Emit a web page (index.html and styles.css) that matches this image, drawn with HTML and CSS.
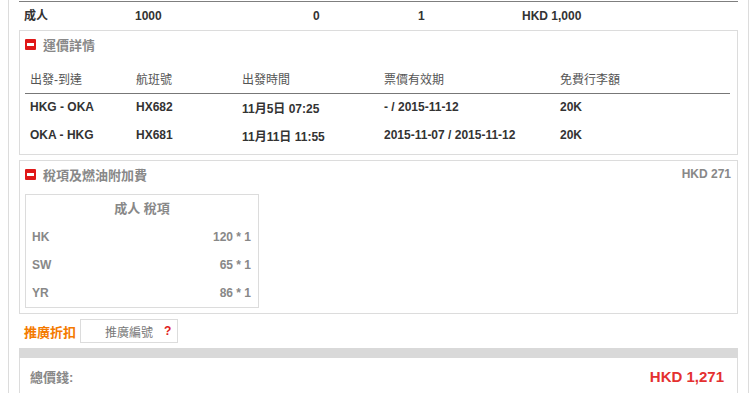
FILE: index.html
```html
<!DOCTYPE html>
<html lang="zh-Hant">
<head>
<meta charset="utf-8">
<title>Fare summary</title>
<link rel="stylesheet" href="styles.css">
</head>
<body>
<div class="page">
  <div class="summary">
    <span>成人</span><span>1000</span><span>0</span><span>1</span><span>HKD 1,000</span>
  </div>

  <section class="box fare">
    <div class="box-title"><i class="minus"></i><span class="title-text">運價詳情</span></div>
    <table class="flights">
      <thead>
        <tr><th class="c1">出發-到達</th><th class="c2">航班號</th><th class="c3">出發時間</th><th class="c4">票價有效期</th><th>免費行李額</th></tr>
      </thead>
      <tbody>
        <tr><td>HKG - OKA</td><td>HX682</td><td>11月5日 07:25</td><td>- / 2015-11-12</td><td>20K</td></tr>
        <tr><td>OKA - HKG</td><td>HX681</td><td>11月11日 11:55</td><td>2015-11-07 / 2015-11-12</td><td>20K</td></tr>
      </tbody>
    </table>
  </section>

  <section class="box tax">
    <div class="box-title"><i class="minus"></i><span class="title-text">稅項及燃油附加費</span><span class="amount">HKD 271</span></div>
    <div class="tax-table">
      <div class="tax-head">成人 稅項</div>
      <div class="tax-row"><span>HK</span><span>120 * 1</span></div>
      <div class="tax-row"><span>SW</span><span>65 * 1</span></div>
      <div class="tax-row"><span>YR</span><span>86 * 1</span></div>
    </div>
  </section>

  <div class="promo">
    <span class="promo-label">推廣折扣</span>
    <div class="promo-input"><span class="placeholder">推廣編號</span><span class="q">?</span></div>
  </div>

  <section class="total">
    <div class="total-bar"></div>
    <div class="total-row"><span class="total-label">總價錢:</span><span class="price">HKD 1,271</span></div>
  </section>
</div>
</body>
</html>
```

FILE: styles.css
```css
* { box-sizing: border-box; }

html, body {
  margin: 0;
  padding: 0;
  background: #fff;
}

body {
  font-family: "Liberation Sans", Arial, "Noto Sans CJK TC", sans-serif;
  font-size: 12px;
  color: #333;
  overflow: hidden;
}

.page {
  margin-left: 8px;
  width: 741px;
  min-height: 100vh;
  padding: 1px 10px 0 10px;
  border-left: 1px solid #dcdcdc;
  border-right: 1px solid #dcdcdc;
}

.summary {
  display: grid;
  grid-template-columns: 111px 178px 105px 104px 1fr;
  height: 29px;
  line-height: 28px;
  border-top: 1px solid #7f7f7f;
  font-weight: bold;
  color: #333;
}
.summary span { padding-left: 5px; }

.box {
  border: 1px solid #dcdcdc;
}

.box-title {
  display: flex;
  align-items: center;
  height: 26px;
  padding: 0 6px 0 5px;
}

.minus {
  position: relative;
  display: block;
  width: 11px;
  height: 11px;
  background: #e01818;
  border-radius: 1px;
  flex: none;
}
.minus::after {
  content: "";
  position: absolute;
  left: 2px;
  top: 4px;
  width: 7px;
  height: 3px;
  background: #fff;
}

.title-text {
  margin-left: 7px;
  font-size: 13px;
  font-weight: bold;
  color: #888;
}

.amount {
  margin-left: auto;
  font-weight: bold;
  color: #888;
}

.fare {
  padding-bottom: 5px;
}

.flights {
  border-collapse: collapse;
  margin: 7px 0 0 5px;
  width: 705px;
}
.flights th {
  height: 29px;
  padding: 0 0 0 5px;
  text-align: left;
  font-weight: normal;
  color: #555;
  border-bottom: 1px solid #777;
}
.flights .c1, .flights .c2 { width: 106px; }
.flights .c3 { width: 142px; }
.flights .c4 { width: 176px; }
.flights td {
  height: 28px;
  padding: 0 0 0 5px;
  font-weight: bold;
  color: #333;
}

.tax {
  margin-top: 5px;
  padding-bottom: 5px;
}

.tax-table {
  margin: 7px 0 0 5px;
  width: 234px;
  border: 1px solid #dcdcdc;
  color: #888;
  font-weight: bold;
}
.tax-head {
  height: 28px;
  line-height: 28px;
  text-align: center;
  font-size: 13px;
}
.tax-row {
  display: flex;
  justify-content: space-between;
  height: 28px;
  line-height: 28px;
  padding: 0 7px 0 6px;
}

.promo {
  display: flex;
  align-items: center;
  margin-top: 5px;
  padding-left: 5px;
  height: 24px;
}
.promo-label {
  font-size: 13px;
  font-weight: bold;
  color: #f47a00;
}
.promo-input {
  display: flex;
  align-items: center;
  margin-left: 4px;
  width: 98px;
  height: 24px;
  border: 1px solid #dcdcdc;
  padding-left: 24px;
}
.placeholder {
  color: #777;
}
.q {
  margin-left: 11px;
  color: #e02020;
  font-weight: bold;
}

.total {
  margin-top: 5px;
}
.total-bar {
  height: 10px;
  background: #d9d9d9;
}
.total-row {
  display: flex;
  align-items: center;
  justify-content: space-between;
  height: 40px;
  padding: 0 13px 4px 10px;
  border-left: 1px solid #dcdcdc;
  border-right: 1px solid #dcdcdc;
}
.total-label {
  font-size: 13px;
  font-weight: bold;
  color: #888;
}
.price {
  font-size: 15px;
  font-weight: bold;
  color: #e43030;
}
```
